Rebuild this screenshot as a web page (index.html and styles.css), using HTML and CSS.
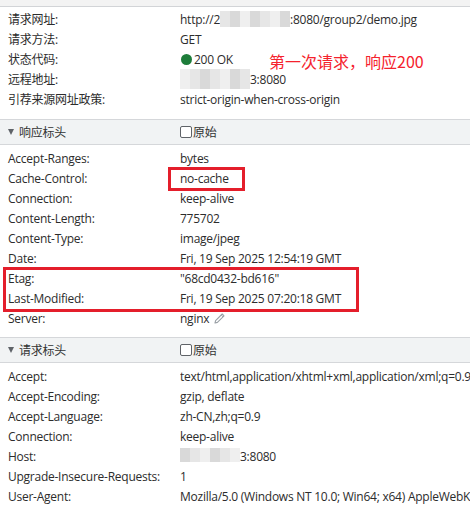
FILE: index.html
```html
<!DOCTYPE html>
<html lang="zh-CN">
<head>
<meta charset="utf-8">
<link rel="stylesheet" href="styles.css">
</head>
<body>
<div class="panel">
  <div class="topstrip"></div>
  <div class="section general">
    <div class="row"><span class="k">请求网址:</span><span class="v">http://2<span class="mosaic m-url"><i class="a"></i><i class="b"></i><i class="c"></i><i class="b"></i><i class="a"></i><i class="c"></i><i class="b"></i></span>:8080/group2/demo.jpg</span></div>
    <div class="row"><span class="k">请求方法:</span><span class="v">GET</span></div>
    <div class="row"><span class="k">状态代码:</span><span class="v"><span class="dot"></span>200 OK</span></div>
    <div class="row"><span class="k">远程地址:</span><span class="v"><span class="mosaic m-ip"><i class="c"></i><i class="a"></i><i class="b"></i><i class="a"></i><i class="c"></i><i class="b"></i><i class="a"></i></span>3:8080</span></div>
    <div class="row"><span class="k">引荐来源网址政策:</span><span class="v">strict-origin-when-cross-origin</span></div>
    <div class="note">第一次请求，响应200</div>
  </div>

  <div class="header"><span class="tri"></span><span class="htitle">响应标头</span><label class="raw"><span class="cb"></span>原始</label></div>
  <div class="section">
    <div class="row"><span class="k">Accept-Ranges:</span><span class="v">bytes</span></div>
    <div class="row boxed-row"><span class="k">Cache-Control:</span><span class="v">no-cache</span></div>
    <div class="row"><span class="k">Connection:</span><span class="v">keep-alive</span></div>
    <div class="row"><span class="k">Content-Length:</span><span class="v">775702</span></div>
    <div class="row"><span class="k">Content-Type:</span><span class="v">image/jpeg</span></div>
    <div class="row"><span class="k">Date:</span><span class="v">Fri, 19 Sep 2025 12:54:19 GMT</span></div>
    <div class="group-box">
      <div class="row"><span class="k">Etag:</span><span class="v">"68cd0432-bd616"</span></div>
      <div class="row"><span class="k">Last-Modified:</span><span class="v">Fri, 19 Sep 2025 07:20:18 GMT</span></div>
    </div>
    <div class="row"><span class="k">Server:</span><span class="v">nginx<svg class="pencil" width="13" height="13" viewBox="0 0 13 13"><path d="M2 11 L2.6 8.6 L9.2 2 L11 3.8 L4.4 10.4 Z" fill="none" stroke="#9aa0a6" stroke-width="1.1" stroke-linejoin="round"/><path d="M8.2 3 L10 4.8" stroke="#9aa0a6" stroke-width="1"/></svg></span></div>
  </div>

  <div class="header"><span class="tri"></span><span class="htitle">请求标头</span><label class="raw"><span class="cb"></span>原始</label></div>
  <div class="section">
    <div class="row"><span class="k">Accept:</span><span class="v">text/html,application/xhtml+xml,application/xml;q=0.9,image/avif,image/webp</span></div>
    <div class="row"><span class="k">Accept-Encoding:</span><span class="v">gzip, deflate</span></div>
    <div class="row"><span class="k">Accept-Language:</span><span class="v">zh-CN,zh;q=0.9</span></div>
    <div class="row"><span class="k">Connection:</span><span class="v">keep-alive</span></div>
    <div class="row"><span class="k">Host:</span><span class="v"><span class="mosaic m-host"><i class="b"></i><i class="a"></i><i class="c"></i><i class="b"></i><i class="a"></i><i class="c"></i></span>3:8080</span></div>
    <div class="row"><span class="k">Upgrade-Insecure-Requests:</span><span class="v">1</span></div>
    <div class="row"><span class="k">User-Agent:</span><span class="v">Mozilla/5.0 (Windows NT 10.0; Win64; x64) AppleWebKit/537.36</span></div>
  </div>
</div>
</body>
</html>
```

FILE: styles.css
```css
html, body {
  margin: 0;
  padding: 0;
  background: #ffffff;
}
body {
  width: 470px;
  height: 523px;
  overflow: hidden;
  font-family: "Open Sans", "Noto Sans CJK SC", sans-serif;
  font-size: 12px;
  letter-spacing: -0.25px;
  color: #2c2c2c;
}
.panel {
  width: 470px;
}
.topstrip {
  height: 6px;
  background: #f3f3f3;
  border-bottom: 1px solid #d2d4d7;
}
.section {
  position: relative;
  padding: 3px 0 9px 0;
}
.general {
  padding: 2px 0 10px 0;
}
.row {
  position: relative;
  display: grid;
  grid-template-columns: 172px 1fr;
  height: 20px;
  align-items: center;
  padding-left: 8px;
  white-space: nowrap;
}
.v {
  display: flex;
  align-items: center;
  overflow: hidden;
}
.dot {
  width: 11px;
  height: 11px;
  border-radius: 50%;
  background: #1e7d3a;
  margin: 0 2px 0 1px;
}
.mosaic {
  display: inline-flex;
  height: 16px;
}
.mosaic i {
  display: block;
  width: 10px;
  height: 16px;
}
.mosaic i.a { background: #e6e6e6; }
.mosaic i.b { background: #d9d9d9; }
.mosaic i.c { background: #efefef; }
.m-ip { height: 20px; }
.m-ip i { height: 20px; }
.m-host i { height: 14px; }
.note {
  position: absolute;
  left: 269px;
  top: 46px;
  font-family: "Noto Sans CJK SC", sans-serif;
  font-size: 16px;
  line-height: 16px;
  letter-spacing: 0;
  color: #f5222d;
  white-space: nowrap;
}
.header {
  display: flex;
  align-items: center;
  height: 24px;
  background: #f1f3f4;
  border-top: 1px solid #d5d7da;
  border-bottom: 1px solid #d5d7da;
  padding-left: 8px;
  color: #333;
}
.tri {
  width: 0;
  height: 0;
  border-left: 3.5px solid transparent;
  border-right: 3.5px solid transparent;
  border-top: 6px solid #5f6368;
  margin-right: 5px;
}
.htitle {
  width: 161px;
}
.raw {
  display: flex;
  align-items: center;
}
.cb {
  width: 10px;
  height: 10px;
  border: 1px solid #5f6368;
  border-radius: 2px;
  margin-right: 1px;
  background: #fff;
}
.boxed-row::after {
  content: "";
  position: absolute;
  left: 168px;
  top: -1px;
  width: 71px;
  height: 18px;
  border: 3px solid #e41e2b;
}
.group-box {
  position: relative;
}
.group-box::after {
  content: "";
  position: absolute;
  left: 3px;
  top: -1px;
  width: 350px;
  height: 39px;
  border: 3px solid #e41e2b;
}
.pencil {
  margin-left: 4px;
}
```
